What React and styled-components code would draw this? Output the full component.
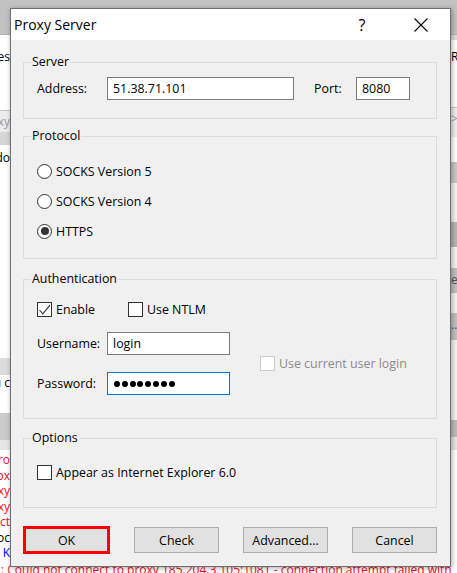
import React from 'react';
import styled, { createGlobalStyle } from 'styled-components';

const GlobalStyle = createGlobalStyle`
  html, body {
    margin: 0;
    padding: 0;
  }
  body {
    width: 457px;
    height: 573px;
    overflow: hidden;
    font-family: "Open Sans", "Noto Sans", sans-serif;
  }
`;

// ---- backdrop (the app window behind the dialog) ----

const backLeft = [
    {h: 75, bg: '#ffffff', text: 'Proxies', pt: 14},
    {h: 22, bg: '#ececec', text: 'Proxy', color: '#9a9a9a', pt: 3, line: true},
    {h: 13, bg: '#d6d6d6'},
    {h: 213, bg: '#ffffff', text: 'Addo', pt: 5},
    {h: 17, bg: '#dcdcdc'},
    {h: 38, bg: '#ffffff', text: 'you c', pt: 0},
    {h: 27, bg: '#cbcbcb'},
    {h: 10, bg: '#e6e6e6'},
]

const logLines = [
    {text: 'Pro', color: '#e81123'},
    {text: 'Prox', color: '#e81123'},
    {text: 'Proxy', color: '#e81123'},
    {text: 'Proxy', color: '#e81123'},
    {text: 'Connect', color: '#e81123'},
    {text: 'Sooc', color: '#000000'},
    {text: 'ul K', color: '#0000ff'},
]

const backRight = [
    {h: 5, bg: '#dcdcdc'},
    {h: 67, bg: '#ffffff', text: 'Refresh', pt: 9},
    {h: 30, bg: '#eeeeee', text: '>', color: '#9a9a9a', pt: 3, line: true},
    {h: 25, bg: '#ffffff'},
    {h: 21, bg: '#c8c8c8'},
    {h: 39, bg: '#f2f2f2'},
    {h: 25, bg: '#b4b4b4'},
    {h: 21, bg: '#f2f2f2'},
    {h: 25, bg: '#c0c0c0', text: 'e', color: '#555', pt: 4},
    {h: 20, bg: '#f2f2f2'},
    {h: 27, bg: '#c0c0c0', text: '...', color: '#555', pt: 4},
    {h: 80, bg: '#f2f2f2'},
    {h: 17, bg: '#bcbcbc'},
    {h: 13, bg: '#e6e6e6'},
    {h: 112, bg: '#ffffff'},
]

function Dialog() {
    return (
        <Window>
            <TitleBar>
                <Title>Proxy Server</Title>
                <HelpButton>?</HelpButton>
                <CloseButton>
                    <svg width="14" height="14" viewBox="0 0 14 14">
                        <path d="M0.5 0.5 L13.5 13.5 M13.5 0.5 L0.5 13.5" stroke="#000" strokeWidth="1.1" fill="none" />
                    </svg>
                </CloseButton>
            </TitleBar>

            <Body>
                <Group $mt={22} $h={57} $pt={14}>
                    <Legend>Server</Legend>
                    <Row>
                        <Label $w={70}>Address:</Label>
                        <Field $w={187}>51.38.71.101</Field>
                        <Label $w={42} $ml={20}>Port:</Label>
                        <Field $w={54}>8080</Field>
                    </Row>
                </Group>

                <Group $mt={17} $h={123} $pt={19}>
                    <Legend>Protocol</Legend>
                    <RadioRow><Radio /><span>SOCKS Version 5</span></RadioRow>
                    <RadioRow><Radio /><span>SOCKS Version 4</span></RadioRow>
                    <RadioRow><Radio $on><RadioDot /></Radio><span>HTTPS</span></RadioRow>
                </Group>

                <Group $mt={20} $h={140} $pt={21}>
                    <Legend>Authentication</Legend>
                    <Row>
                        <CheckItem $w={91}>
                            <Box>
                                <svg width="15" height="15" viewBox="0 0 15 15">
                                    <polyline points="2.5,8 5.8,11.8 13,3.2" stroke="#333" strokeWidth="1.1" fill="none" />
                                </svg>
                            </Box>
                            <span>Enable</span>
                        </CheckItem>
                        <CheckItem>
                            <Box />
                            <span>Use NTLM</span>
                        </CheckItem>
                    </Row>
                    <AuthBody>
                        <Column>
                            <Row>
                                <Label $w={70}>Username:</Label>
                                <Field $w={123}>login</Field>
                            </Row>
                            <Row $mt={17}>
                                <Label $w={70}>Password:</Label>
                                <Field $w={123} $focus>
                                    <Dots>
                                        {Array.from({length: 8}).map((_, i) => <Dot key={i} />)}
                                    </Dots>
                                </Field>
                            </Row>
                        </Column>
                        <CheckItem $disabled $ml={30}>
                            <Box $disabled />
                            <span>Use current user login</span>
                        </CheckItem>
                    </AuthBody>
                </Group>

                <Group $mt={19} $h={70} $pt={25}>
                    <Legend>Options</Legend>
                    <CheckItem>
                        <Box />
                        <span>Appear as Internet Explorer 6.0</span>
                    </CheckItem>
                </Group>

                <Buttons>
                    <Button $marked>OK</Button>
                    <Button>Check</Button>
                    <Button>Advanced...</Button>
                    <Button>Cancel</Button>
                </Buttons>
            </Body>
        </Window>
    )
}

function App() {
    return (
        <Screen>
            <GlobalStyle />
            <TopBand />
            <Middle>
                <Side $w={10}>
                    {backLeft.map((b, i) => (
                        <Block key={i} $h={b.h} $bg={b.bg} $color={b.color} $pt={b.pt} $line={b.line} $justify="flex-end">
                            {b.text}
                        </Block>
                    ))}
                    <Log>
                        {logLines.map((l, i) => (
                            <LogLine key={i} $color={l.color}>{l.text}</LogLine>
                        ))}
                    </Log>
                </Side>
                <Spacer />
                <Side $w={6}>
                    {backRight.map((b, i) => (
                        <Block key={i} $h={b.h} $bg={b.bg} $color={b.color} $pt={b.pt} $line={b.line} $justify="flex-start">
                            {b.text}
                        </Block>
                    ))}
                </Side>
            </Middle>
            <BottomLine>: Could not connect to proxy 185.204.3.105:1081 - connection attempt failed with</BottomLine>
            <Dialog />
        </Screen>
    )
}

const Screen = styled.div`
    position: relative;
    width: 457px;
    height: 573px;
    overflow: hidden;
    background: #ffffff;
    display: flex;
    flex-direction: column;
    font-size: 12px;
`;

const TopBand = styled.div`
    height: 34px;
    flex: none;
    background: #c2c2c2;
    border-bottom: 1px solid #b2b2b2;
`;

const Middle = styled.div`
    height: 527px;
    flex: none;
    display: flex;
`;

const Side = styled.div`
    width: ${p => p.$w}px;
    display: flex;
    flex-direction: column;
    overflow: hidden;
`;

const Spacer = styled.div`
    flex: 1;
`;

const Block = styled.div`
    height: ${p => p.$h}px;
    width: 100%;
    flex: none;
    box-sizing: border-box;
    background: ${p => p.$bg};
    color: ${p => p.$color || '#000'};
    padding-top: ${p => p.$pt || 0}px;
    border-top: ${p => p.$line ? '1px solid #c8c8c8' : 'none'};
    line-height: 16px;
    white-space: nowrap;
    display: flex;
    justify-content: ${p => p.$justify};
    align-items: flex-start;
`;

const Log = styled.div`
    height: 112px;
    width: 100%;
    flex: none;
    padding-top: 2px;
    box-sizing: border-box;
    display: flex;
    flex-direction: column;
    align-items: flex-end;
`;

const LogLine = styled.div`
    height: 15.5px;
    line-height: 15.5px;
    white-space: nowrap;
    color: ${p => p.$color};
`;

const BottomLine = styled.div`
    height: 12px;
    flex: none;
    line-height: 16px;
    padding-left: 1px;
    white-space: nowrap;
    color: #e81123;
`;

// ---- dialog ----

const Window = styled.div`
    position: absolute;
    left: 10px;
    top: 8px;
    width: 441px;
    height: 559px;
    box-sizing: border-box;
    border: 1px solid #6f6f6f;
    background: #f0f0f0;
    box-shadow: 1px 1px 5px rgba(0, 0, 0, 0.35);
    display: flex;
    flex-direction: column;
    color: #000;
    font-size: 12.4px;
`;

const TitleBar = styled.div`
    height: 31px;
    flex: none;
    background: #ffffff;
    display: flex;
    align-items: center;
`;

const Title = styled.div`
    flex: 1;
    padding-left: 3px;
    font-size: 14px;
`;

const HelpButton = styled.div`
    width: 46px;
    height: 31px;
    margin-right: 13px;
    display: flex;
    align-items: center;
    justify-content: center;
    font-size: 16px;
`;

const CloseButton = styled.div`
    width: 46px;
    height: 31px;
    margin-right: 6px;
    display: flex;
    align-items: center;
    justify-content: center;
`;

const Body = styled.div`
    flex: 1;
    padding: 0 13px 0 12px;
    display: flex;
    flex-direction: column;
`;

const Group = styled.div`
    position: relative;
    flex: none;
    margin-top: ${p => p.$mt}px;
    height: ${p => p.$h}px;
    box-sizing: border-box;
    border: 1px solid #dcdcdc;
    padding: ${p => p.$pt}px 0 0 13px;
`;

const Legend = styled.div`
    position: absolute;
    top: -9px;
    left: 7px;
    padding: 0 1px;
    line-height: 16px;
    background: #f0f0f0;
`;

const Row = styled.div`
    display: flex;
    align-items: center;
    margin-top: ${p => p.$mt || 0}px;
`;

const Label = styled.div`
    width: ${p => p.$w}px;
    margin-left: ${p => p.$ml || 0}px;
    flex: none;
`;

const Field = styled.div`
    width: ${p => p.$w}px;
    height: 23px;
    flex: none;
    box-sizing: border-box;
    border: 1px solid ${p => p.$focus ? '#0078d7' : '#7a7a7a'};
    background: #ffffff;
    padding-left: 5px;
    line-height: 19px;
    display: flex;
    align-items: center;
`;

const Dots = styled.div`
    display: flex;
    gap: 1.8px;
    padding-left: 1px;
`;

const Dot = styled.span`
    width: 6px;
    height: 6px;
    border-radius: 50%;
    background: #000;
`;

const RadioRow = styled.div`
    height: 30px;
    display: flex;
    align-items: center;
    gap: 4px;
`;

const Radio = styled.div`
    width: 15px;
    height: 15px;
    box-sizing: border-box;
    border: 1px solid #333333;
    border-radius: 50%;
    background: #ffffff;
    display: flex;
    align-items: center;
    justify-content: center;
`;

const RadioDot = styled.div`
    width: 8px;
    height: 8px;
    border-radius: 50%;
    background: #333333;
`;

const CheckItem = styled.div`
    width: ${p => p.$w ? p.$w + 'px' : 'auto'};
    margin-left: ${p => p.$ml || 0}px;
    display: flex;
    align-items: center;
    gap: 4px;
    color: ${p => p.$disabled ? '#8a8a8a' : '#000'};
`;

const Box = styled.div`
    width: 15px;
    height: 15px;
    flex: none;
    box-sizing: border-box;
    border: 1px solid ${p => p.$disabled ? '#cccccc' : '#333333'};
    background: #ffffff;
    display: flex;
    svg {
        margin: -1px;
    }
`;

const AuthBody = styled.div`
    margin-top: 14px;
    display: flex;
    align-items: center;
`;

const Column = styled.div`
    display: flex;
    flex-direction: column;
`;

const Buttons = styled.div`
    margin-top: 18px;
    display: flex;
    align-items: center;
    justify-content: space-between;
`;

const Button = styled.div`
    width: ${p => p.$marked ? 87 : 85}px;
    height: ${p => p.$marked ? 28 : 26}px;
    box-sizing: border-box;
    border: ${p => p.$marked ? '3px solid #ff0000' : '1px solid #adadad'};
    background: #e1e1e1;
    display: flex;
    align-items: center;
    justify-content: center;
`;

export default App
